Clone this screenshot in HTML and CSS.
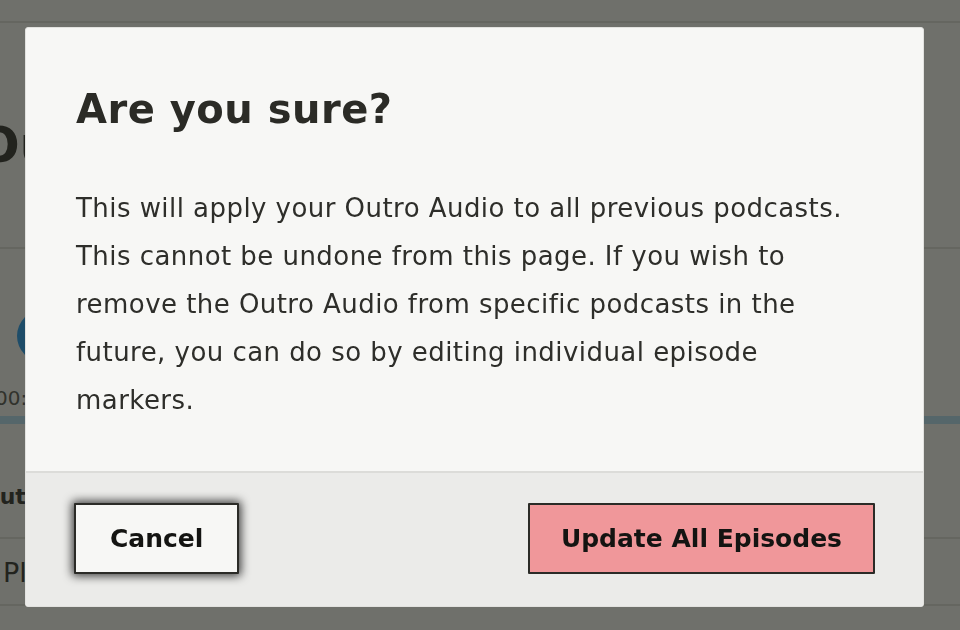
FILE: index.html
```html
<!DOCTYPE html>
<html lang="en">
<head>
    <meta charset="UTF-8">
    <meta name="viewport" content="width=device-width, initial-scale=1.0">
    <title>Outro Audio</title>
    <link rel="stylesheet" href="styles.css">
</head>
<body>
    <div class="page">
        <div class="topbar"></div>
        <div class="title-block">
            <h1 class="page-title">Outro Audio</h1>
        </div>
        <div class="player">
            <div class="play-btn"></div>
            <div class="time">00:00 / 00:30</div>
            <div class="progress"></div>
        </div>
        <div class="row row-head">Outro Audio</div>
        <div class="row row-item">Placement</div>
    </div>

    <div class="overlay"></div>

    <div class="modal" role="dialog">
        <div class="modal-body">
            <h2 class="modal-title">Are you sure?</h2>
            <p class="modal-text">This will apply your Outro Audio to all previous podcasts. This cannot be undone from this page. If you wish to remove the Outro Audio from specific podcasts in the future, you can do so by editing individual episode markers.</p>
        </div>
        <div class="modal-footer">
            <button class="btn btn-cancel">Cancel</button>
            <button class="btn btn-confirm">Update All Episodes</button>
        </div>
    </div>
</body>
</html>
```

FILE: styles.css
```css
* {
    box-sizing: border-box;
}
body {
    margin: 0;
    font-family: "DejaVu Sans", sans-serif;
    background: #f7f7f5;
    color: #2e2e2a;
}
.page {
    height: 630px;
    overflow: hidden;
}
.topbar {
    height: 23px;
    border-bottom: 2px solid #dcdcd8;
}
.title-block {
    padding: 98px 0 77px;
    border-bottom: 2px solid #dcdcd8;
}
.page-title {
    margin: 0 0 0 -22px;
    font-size: 49px;
    line-height: 49px;
    font-weight: bold;
    white-space: nowrap;
}
.player {
    padding-top: 61px;
}
.play-btn {
    width: 52px;
    height: 52px;
    margin-left: 17px;
    border-radius: 50%;
    background: #249bf0;
}
.time {
    margin: 26px 0 0 -5px;
    font-size: 20px;
    line-height: 20px;
    color: #555550;
    white-space: nowrap;
}
.progress {
    height: 8px;
    margin-top: 8px;
    background: #b2dcf2;
}
.row {
    border-bottom: 2px solid #dcdcd8;
    white-space: nowrap;
}
.row-head {
    padding: 62px 0 29px;
    margin-left: -19px;
    font-size: 22px;
    line-height: 22px;
    font-weight: bold;
}
.row-item {
    padding: 20px 0 18px 3px;
    font-size: 27px;
    line-height: 27px;
}
.overlay {
    position: fixed;
    inset: 0;
    background: rgba(28, 29, 22, 0.62);
}
.modal {
    position: fixed;
    top: 27px;
    left: 25px;
    width: 899px;
    background: #f7f7f5;
    border: 1px solid #e2e2df;
    border-radius: 3px;
    overflow: hidden;
}
.modal-body {
    padding: 58px 50px 47px;
}
.modal-title {
    margin: 0 0 52px;
    font-size: 40px;
    line-height: 46px;
    letter-spacing: 0.5px;
    font-weight: bold;
    color: #2b2b26;
}
.modal-text {
    margin: 0;
    font-size: 26px;
    line-height: 48px;
    letter-spacing: 0.45px;
    color: #2e2e2a;
}
.modal-footer {
    display: flex;
    justify-content: space-between;
    padding: 30px 48px 32px 48px;
    background: #ebebe9;
    border-top: 2px solid #dcdcd9;
}
.btn {
    padding: 21px 34px;
    border: 2px solid #2b2b27;
    border-radius: 1px;
    font-family: "DejaVu Sans", sans-serif;
    font-size: 25px;
    line-height: 25px;
    font-weight: bold;
    color: #141412;
    cursor: pointer;
}
.btn-cancel {
    background: #f7f7f5;
    box-shadow: 0 0 10px 2px rgba(0, 0, 0, 0.75);
}
.btn-confirm {
    padding: 21px 31px;
    background: #f0979a;
}
```
